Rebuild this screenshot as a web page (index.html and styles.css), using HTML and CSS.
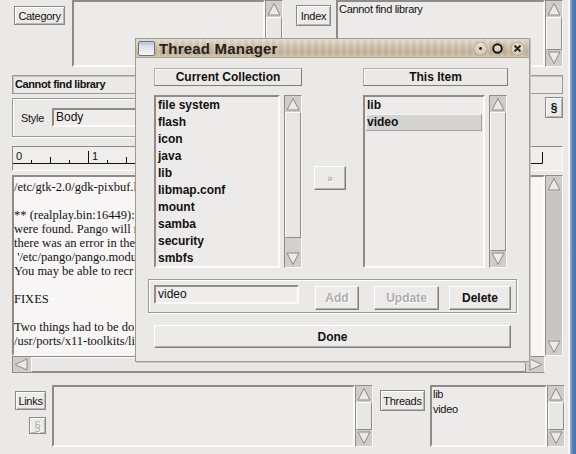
FILE: index.html
```html
<!DOCTYPE html>
<html>
<head>
<meta charset="utf-8">
<title>Thread Manager</title>
<link rel="stylesheet" href="styles.css">
</head>
<body>
<div class="screen">
  <div class="app">
    <div class="toprow">
      <div class="btn cat-btn">Category</div>
      <div class="field cat-field"></div>
      <div class="vs">
        <i class="ar"><svg width="16" height="16" viewBox="0 0 16 16"><path class="tri" d="M8 2.5 L14 14 H2 Z"/></svg></i>
        <div class="tr"><div class="th full"></div></div>
        <i class="ar"><svg width="16" height="16" viewBox="0 0 16 16"><path class="tri" d="M8 13.5 L14 2 H2 Z"/></svg></i>
      </div>
      <div class="btn idx-btn">Index</div>
      <div class="field idx-field">Cannot find library</div>
      <div class="vs">
        <i class="ar"><svg width="16" height="16" viewBox="0 0 16 16"><path class="tri" d="M8 2.5 L14 14 H2 Z"/></svg></i>
        <div class="tr"><div class="th full"></div></div>
        <i class="ar"><svg width="16" height="16" viewBox="0 0 16 16"><path class="tri" d="M8 13.5 L14 2 H2 Z"/></svg></i>
      </div>
    </div>

    <div class="status">Cannot find library</div>

    <div class="stylerow">
      <div class="styleframe">
        <span class="style-lbl">Style</span>
        <div class="entry style-entry">Body</div>
      </div>
      <div class="btn sect-btn">§</div>
    </div>

    <div class="ruler">
      <svg width="551" height="23" viewBox="0 0 551 23">
        <text x="3" y="13" class="rtext">0</text>
        <text x="79" y="13" class="rtext">1</text>
        <path class="rline" d="M0 16.5 H529.5 V5 M18.5 16 V13 M37.5 16 V10 M56.5 16 V13 M75.5 16 V4 M94.5 16 V13 M113.5 16 V10 M132.5 16 V13 M150.5 16 V4 M169.5 16 V13 M188.5 16 V10 M207.5 16 V13 M225.5 16 V4 M244.5 16 V13 M263.5 16 V10 M282.5 16 V13 M300.5 16 V4 M319.5 16 V13 M338.5 16 V10 M357.5 16 V13 M375.5 16 V4 M394.5 16 V13 M413.5 16 V10 M432.5 16 V13 M450.5 16 V4 M469.5 16 V13 M488.5 16 V10 M507.5 16 V13"/>
      </svg>
    </div>

    <div class="editor">
      <div class="edtext">/etc/gtk-2.0/gdk-pixbuf.l

** (realplay.bin:16449):
were found. Pango will n
there was an error in the
 '/etc/pango/pango.modu
You may be able to recr

FIXES

Two things had to be do
/usr/ports/x11-toolkits/li</div>
      <div class="vs ed-vs">
        <i class="ar"><svg width="16" height="16" viewBox="0 0 16 16"><path class="tri" d="M8 2.5 L14 14 H2 Z"/></svg></i>
        <div class="tr dark"></div>
        <i class="ar"><svg width="16" height="16" viewBox="0 0 16 16"><path class="tri" d="M8 13.5 L14 2 H2 Z"/></svg></i>
      </div>
      <div class="hs">
        <i class="ar"><svg width="16" height="15" viewBox="0 0 16 15"><path class="tri" d="M2 7.5 L14 2 V13 Z"/></svg></i>
        <div class="htr"><div class="hth"></div></div>
        <i class="ar"><svg width="16" height="15" viewBox="0 0 16 15"><path class="tri" d="M14 7.5 L2 2 V13 Z"/></svg></i>
      </div>
      <div class="corner"></div>
    </div>

    <div class="botrow">
      <div class="links-col">
        <div class="btn links-btn">Links</div>
        <div class="btn sect-btn dis">§</div>
      </div>
      <div class="field links-field"></div>
      <div class="vs">
        <i class="ar"><svg width="16" height="16" viewBox="0 0 16 16"><path class="tri" d="M8 2.5 L14 14 H2 Z"/></svg></i>
        <div class="tr"><div class="th full"></div></div>
        <i class="ar"><svg width="16" height="16" viewBox="0 0 16 16"><path class="tri" d="M8 13.5 L14 2 H2 Z"/></svg></i>
      </div>
      <div class="btn threads-btn">Threads</div>
      <div class="field threads-field">lib<br>video</div>
      <div class="vs">
        <i class="ar"><svg width="16" height="16" viewBox="0 0 16 16"><path class="tri" d="M8 2.5 L14 14 H2 Z"/></svg></i>
        <div class="tr"><div class="th full"></div></div>
        <i class="ar"><svg width="16" height="16" viewBox="0 0 16 16"><path class="tri" d="M8 13.5 L14 2 H2 Z"/></svg></i>
      </div>
    </div>
  </div>
  <div class="desk"></div>

  <div class="dialog">
    <div class="titlebar">
      <svg class="ticon" width="17" height="15" viewBox="0 0 17 15"><defs><linearGradient id="ig" x1="0" y1="0" x2="0" y2="1"><stop offset="0" stop-color="#c9d6e4"/><stop offset="1" stop-color="#f4f7fa"/></linearGradient></defs><rect x="0.5" y="0.5" width="16" height="14" rx="1.5" fill="url(#ig)" stroke="#6f7075"/><rect x="1.5" y="1.5" width="14" height="2" fill="#b8c6d6"/></svg>
      <span class="ttext">Thread Manager</span>
      <div class="tbtns">
        <svg width="15" height="15" viewBox="0 0 15 15"><circle cx="7.5" cy="7.5" r="6.5" class="tbg"/><circle cx="7.5" cy="7.5" r="1.4" fill="#1a1a1a"/></svg>
        <svg width="15" height="15" viewBox="0 0 15 15"><circle cx="7.5" cy="7.5" r="6.5" class="tbg"/><circle cx="7.5" cy="7.5" r="4.3" fill="none" stroke="#111" stroke-width="2"/></svg>
        <svg width="15" height="15" viewBox="0 0 15 15"><circle cx="7.5" cy="7.5" r="6.5" class="tbg"/><path d="M4.5 4.5 L10.5 10.5 M10.5 4.5 L4.5 10.5" stroke="#222" stroke-width="1.8"/></svg>
      </div>
    </div>
    <div class="dbody">
      <div class="dgrid">
        <div class="sect left-sect">
          <div class="hdr left-hdr">Current Collection</div>
          <div class="listrow">
            <div class="list left-list">
              <div class="item">file system</div>
              <div class="item">flash</div>
              <div class="item">icon</div>
              <div class="item">java</div>
              <div class="item">lib</div>
              <div class="item">libmap.conf</div>
              <div class="item">mount</div>
              <div class="item">samba</div>
              <div class="item">security</div>
              <div class="item">smbfs</div>
            </div>
            <div class="vs lvs">
              <i class="ar"><svg width="16" height="16" viewBox="0 0 16 16"><path class="tri" d="M8 2.5 L14 14 H2 Z"/></svg></i>
              <div class="tr"><div class="th part"></div></div>
              <i class="ar"><svg width="16" height="16" viewBox="0 0 16 16"><path class="tri" d="M8 13.5 L14 2 H2 Z"/></svg></i>
            </div>
          </div>
        </div>
        <div class="midcol">
          <div class="dbtn dis move">»</div>
        </div>
        <div class="sect right-sect">
          <div class="hdr right-hdr">This Item</div>
          <div class="listrow">
            <div class="list right-list">
              <div class="item">lib</div>
              <div class="item sel">video</div>
            </div>
            <div class="vs lvs">
              <i class="ar"><svg width="16" height="16" viewBox="0 0 16 16"><path class="tri" d="M8 2.5 L14 14 H2 Z"/></svg></i>
              <div class="tr"><div class="th full"></div></div>
              <i class="ar"><svg width="16" height="16" viewBox="0 0 16 16"><path class="tri" d="M8 13.5 L14 2 H2 Z"/></svg></i>
            </div>
          </div>
        </div>
      </div>
      <div class="editframe">
        <div class="entry item-entry">video</div>
        <div class="dbtn dis add-btn">Add</div>
        <div class="dbtn dis upd-btn">Update</div>
        <div class="dbtn del-btn">Delete</div>
      </div>
      <div class="dbtn done-btn">Done</div>
    </div>
  </div>
</div>
</body>
</html>
```
FILE: styles.css
```css
* { box-sizing: border-box; margin: 0; padding: 0; }
html, body { width: 576px; height: 454px; overflow: hidden; }
body {
  background: #ebe9e6;
  font-family: "Liberation Sans", Arial, sans-serif;
  font-size: 11px;
  color: #111;
}
.screen { position: relative; display: flex; width: 576px; height: 454px; }
.app {
  width: 570px; height: 454px;
  padding-left: 12px;
  display: flex; flex-direction: column;
  border-right: 2px solid #f7f6f4;
  overflow: hidden;
}
.desk { flex: 1; background: linear-gradient(90deg, #a8bfdc 0%, #5a86bd 35%, #4672ab 100%); }

/* generic widgets */
.btn {
  display: flex; align-items: center; justify-content: center;
  border: 1px solid #8a8886;
  box-shadow: inset 1px 1px #ffffff, inset -1px -1px #b9b7b5;
  background: #ecebe9;
  letter-spacing: -0.3px;
  flex: none;
}
.btn.dis { color: #aaa8a6; text-shadow: 1px 1px #fff; }
.field {
  border: 2px solid;
  border-color: #8e8c8a #fbfbfa #fbfbfa #8e8c8a;
  background: #edebe9;
  flex: none;
  letter-spacing: -0.3px;
}
.vs {
  width: 18px; flex: none;
  display: flex; flex-direction: column;
  border: 1px solid;
  border-color: #8e8c8a #f8f8f7 #f8f8f7 #8e8c8a;
  background: #d3d1cf;
}
.vs .ar, .hs .ar {
  display: block; flex: none; width: 16px; height: 16px;
  background: #cfcdcb;
}
.hs .ar { height: 15px; }
.tri { fill: #eceae8; stroke: #8d8b89; stroke-width: 1; }
.tr { flex: 1; display: flex; flex-direction: column; }
.tr.dark { background: #c7c5c3; }
.th {
  background: #e9e7e5;
  border: 1px solid;
  border-color: #fbfbfa #8e8c8a #8e8c8a #fbfbfa;
}
.th.full { flex: 1; }
.th.part { height: 126px; }

/* top row */
.toprow { display: flex; height: 67px; padding-left: 2px; flex: none; }
.cat-btn { width: 51px; height: 19px; margin-top: 6px; margin-right: 7px; }
.cat-field { width: 193px; height: 67px; }
.idx-btn { width: 35px; height: 21px; margin-top: 5px; margin-left: 13px; margin-right: 5px; }
.idx-field { width: 209px; height: 67px; padding: 1px 1px; line-height: 13px; }

.status {
  flex: none;
  margin-top: 8px;
  width: 551px; height: 19px;
  border: 1px solid #9c9a98;
  box-shadow: inset 1px 1px #c4c2c0;
  padding-left: 2px;
  font-weight: bold;
  letter-spacing: -0.4px;
  line-height: 17px;
}

.stylerow { flex: none; display: flex; align-items: flex-start; margin-top: 4px; height: 39px; }
.styleframe {
  width: 508px; height: 39px;
  border: 1px solid #9a9896;
  box-shadow: inset 1px 1px #fff, 1px 1px #fff;
  display: flex; align-items: center;
  padding-left: 8px;
}
.style-lbl { letter-spacing: -0.3px; margin-right: 8px; }
.entry {
  border: 2px solid;
  border-color: #8e8c8a #fbfbfa #fbfbfa #8e8c8a;
  background: #eeedeb;
}
.style-entry { flex: 1; height: 19px; font-size: 12px; line-height: 15px; padding-left: 2px; }
.sect-btn { width: 18px; height: 21px; margin-left: 25px; margin-top: -1px; font-weight: bold; font-size: 12px; }

.ruler {
  flex: none; margin-top: 9px;
  width: 551px; height: 25px;
  border: 1px solid;
  border-color: #8e8c8a #fbfbfa #fbfbfa #8e8c8a;
  background: #efeeec;
}
.ruler svg { display: block; }
.rtext { font-family: "Liberation Sans", Arial, sans-serif; font-size: 11px; fill: #111; }
.rline { stroke: #111; stroke-width: 1; fill: none; }

.editor {
  flex: none; margin-top: 4px;
  height: 198px; width: 551px;
  display: grid;
  grid-template-columns: 533px 18px;
  grid-template-rows: 181px 17px;
}
.edtext {
  border: 2px solid;
  border-color: #8e8c8a #fbfbfa transparent #8e8c8a;
  background: #f7f6f4;
  font-family: "Liberation Serif", "Times New Roman", serif;
  font-size: 12.5px;
  line-height: 14px;
  white-space: pre;
  overflow: hidden;
  padding-top: 3px;
  color: #111;
}
.ed-vs { height: 181px; }
.hs {
  display: flex; height: 17px;
  border: 1px solid;
  border-color: #8e8c8a #f8f8f7 #8e8c8a #8e8c8a;
  background: #d3d1cf;
}
.htr { flex: 1; padding: 0 2px; display: flex; }
.hth {
  flex: 1;
  background: #e9e7e5;
  border: 1px solid;
  border-color: #fbfbfa #8e8c8a #8e8c8a #fbfbfa;
}
.corner { background: #ebe9e6; }

.botrow { flex: none; display: flex; margin-top: 12px; height: 62px; }
.links-col { width: 40px; display: flex; flex-direction: column; align-items: flex-end; padding-right: 6px; }
.links-btn { width: 31px; height: 19px; margin-top: 6px; }
.links-col .sect-btn { width: 17px; height: 17px; margin: 7px 0 0 0; font-weight: normal; font-size: 12px; }
.links-field { width: 303px; height: 62px; }
.threads-btn { width: 45px; height: 21px; margin-top: 5px; margin-left: 7px; margin-right: 5px; }
.threads-field { width: 117px; height: 62px; padding: 0 1px; line-height: 15px; }

/* dialog */
.dialog {
  position: absolute; left: 135px; top: 38px;
  width: 395px; height: 324px;
  background: #ebe9e6;
  border: 1px solid #9f9a93;
  box-shadow: 1px 1px 0 #c9c6c2;
  display: flex; flex-direction: column;
}
.titlebar {
  height: 19px; flex: none;
  display: flex; align-items: center;
  padding-left: 2px;
  background:
    repeating-linear-gradient(90deg, rgba(255,255,255,0.08) 0 3px, rgba(0,0,0,0.03) 3px 7px),
    linear-gradient(180deg, #e6ded1 0%, #d3c6b0 35%, #c3b399 75%, #d1c5b1 100%);
  border-bottom: 1px solid #b1a690;
}
.ticon { display: block; flex: none; }
.ttext { font-size: 15px; font-weight: bold; color: #26211c; margin-left: 4px; letter-spacing: 0.2px; }
.tbtns { margin-left: auto; display: flex; align-items: center; gap: 2px; padding-right: 4px; }
.tbtns svg { display: block; }
.tbtns svg:last-child { margin-left: 3px; }
.tbg { fill: rgba(240, 234, 224, 0.55); stroke: #b6aa95; stroke-width: 1; }

.dbody { padding: 10px 0 0 18px; display: flex; flex-direction: column; }
.dgrid { display: flex; height: 200px; }
.sect { display: flex; flex-direction: column; }
.hdr {
  height: 18px;
  display: flex; align-items: center; justify-content: center;
  font-weight: bold; font-size: 12px;
  border: 1px solid;
  border-color: #b3b1af #7f7d7b #7f7d7b #b3b1af;
  box-shadow: inset 1px 1px #fafaf9;
}
.left-hdr { width: 148px; }
.right-hdr { width: 145px; }
.listrow { display: flex; gap: 4px; margin-top: 9px; height: 173px; }
.list {
  border: 2px solid;
  border-color: #8e8c8a #fbfbfa #fbfbfa #8e8c8a;
  background: #ecebe9;
  padding: 0 1px;
}
.left-list { width: 126px; }
.right-list { width: 122px; }
.item { font-weight: bold; font-size: 12px; line-height: 17px; padding-left: 1px; height: 17px; }
.item.sel { background: #d5d3d1; box-shadow: inset -1px -1px #a3a19f, inset 1px 1px #f4f3f2; }
.lvs { height: 173px; }

.midcol { width: 32px; margin-left: 12px; display: flex; align-items: flex-start; }
.dbtn {
  display: flex; align-items: center; justify-content: center;
  border: 1px solid;
  border-color: #ffffff #7f7d7b #7f7d7b #ffffff;
  box-shadow: inset -1px -1px #b3b1af;
  background: #ecebe9;
  font-weight: bold; font-size: 12px;
  flex: none;
}
.dbtn.dis { color: #aeacaa; font-weight: bold; text-shadow: 1px 1px #fff; }
.move { width: 32px; height: 24px; margin-top: 98px; font-size: 10px; font-weight: normal; }
.right-sect { margin-left: 17px; }

.editframe {
  margin-top: 11px; margin-left: -6px;
  width: 369px; height: 34px;
  border: 1px solid #9a9896;
  box-shadow: inset 1px 1px #fff, 1px 1px #fff;
  display: flex; align-items: flex-start;
  padding: 5px 0 0 5px;
}
.item-entry { width: 145px; height: 19px; font-size: 12px; line-height: 15px; padding-left: 2px; background: #eeedeb; }
.add-btn { width: 44px; height: 24px; margin-left: 16px; margin-top: 1px; }
.upd-btn { width: 65px; height: 24px; margin-left: 15px; margin-top: 1px; }
.del-btn { width: 62px; height: 24px; margin-left: 10px; margin-top: 1px; }
.done-btn { margin-top: 12px; width: 357px; height: 23px; }
```
